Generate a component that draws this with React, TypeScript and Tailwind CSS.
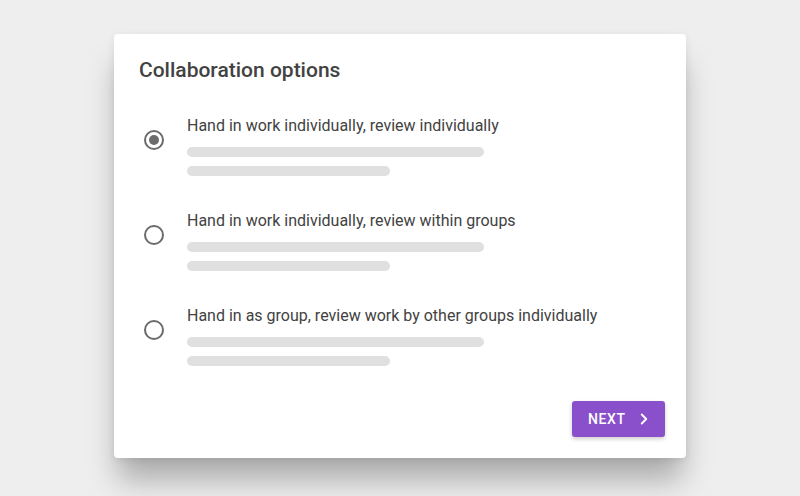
import { ChevronRight } from "lucide-react";

const options = [
  { label: "Hand in work individually, review individually", checked: true },
  { label: "Hand in work individually, review within groups", checked: false },
  { label: "Hand in as group, review work by other groups individually", checked: false },
];

function Radio({ checked }: { checked: boolean }) {
  return (
    <div className="mt-[14px] flex h-5 w-5 shrink-0 items-center justify-center rounded-full border-2 border-[#6b6b6b]">
      {checked && <div className="h-[10px] w-[10px] rounded-full bg-[#6b6b6b]" />}
    </div>
  );
}

export default function App() {
  return (
    <div
      className="flex min-h-screen justify-center bg-[#eeeeee] pt-[34px]"
      style={{ fontFamily: "Roboto, 'Noto Sans', sans-serif" }}
    >
      <div className="flex h-[424px] w-[572px] flex-col rounded-[4px] bg-white px-[25px] pb-[21px] pt-[22px] shadow-[0_26px_28px_-4px_rgba(0,0,0,0.28),0_2px_8px_rgba(0,0,0,0.08)]">
        {/* Title */}
        <h2 className="text-[21px] font-medium leading-[28px] text-[#424242]">Collaboration options</h2>

        {/* Options */}
        <div className="mt-[32px] flex flex-col gap-[35px]">
          {options.map((opt) => (
            <div key={opt.label} className="flex gap-[23px] pl-[5px]">
              <Radio checked={opt.checked} />
              <div className="flex flex-col">
                <span className="text-[16px] leading-5 text-[#424242]">{opt.label}</span>
                <div className="mt-[11px] h-[10px] w-[297px] rounded-full bg-[#e0e0e0]" />
                <div className="mt-[9px] h-[10px] w-[203px] rounded-full bg-[#e0e0e0]" />
              </div>
            </div>
          ))}
        </div>

        {/* Footer */}
        <div className="mt-auto flex justify-end">
          <button className="-mr-[4px] flex h-9 w-[93px] items-center rounded-[3px] bg-[#8a4fca] pl-4 pr-3 text-[14px] font-medium tracking-[0.6px] text-white shadow-[0_2px_4px_rgba(0,0,0,0.2)]">
            NEXT
            <ChevronRight className="ml-auto h-[18px] w-[18px]" strokeWidth={2.6} />
          </button>
        </div>
      </div>
    </div>
  );
}
